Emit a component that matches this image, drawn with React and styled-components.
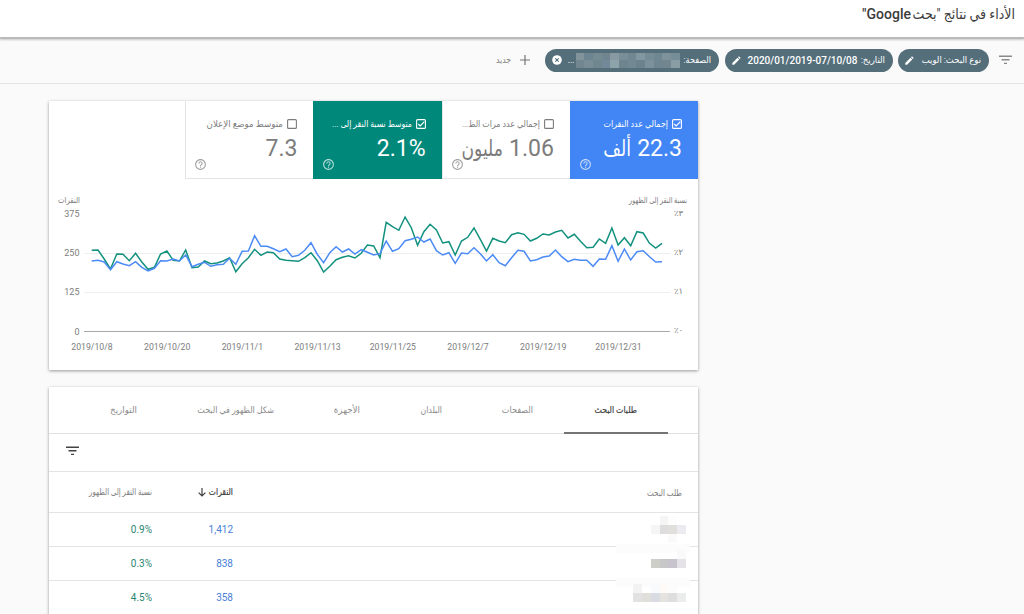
import styled, { createGlobalStyle } from "styled-components";

const GlobalStyle = createGlobalStyle`
  * {
    box-sizing: border-box;
  }
  body {
    margin: 0;
    height: 614px;
    overflow: hidden;
    background: #fafafa;
    font-family: Roboto, "Liberation Serif", "DejaVu Sans", sans-serif;
    color: #7c7c7c;
  }
`;

const Page = styled.div`
  direction: rtl;
  width: 1024px;
  height: 614px;
  overflow: hidden;
`;

const Header = styled.header`
  height: 39px;
  padding: 4px 9px 0 0;
  background: white;
  border-bottom: 2px solid #bababa;
  box-shadow: 0 1px 2px rgba(0, 0, 0, 0.2);
  position: relative;
`;

const Title = styled.h1`
  display: flex;
  gap: 4px;
  margin: 0;
  font-size: 14px;
  font-weight: 500;
  line-height: 20px;
  color: #3c3c3c;
`;

// 아랍어 글자 폭 조절
const Arabic = styled.span`
  display: inline-block;
  flex-shrink: 0;
  width: ${(props) => props.$w}px;
  font-size: ${(props) => props.$size || 9}px;
  font-weight: 400;
  white-space: nowrap;
  transform: scaleX(${(props) => props.$k || 0.9});
  transform-origin: right;
  -webkit-text-stroke: ${(props) => (props.$bold ? "0.2px" : "0")};
`;

const FilterBar = styled.div`
  display: flex;
  align-items: center;
  height: 45px;
  padding: 0 12px 2px 0;
  border-bottom: 1px solid #e4e4e4;
`;

const Chip = styled.div`
  display: flex;
  align-items: center;
  justify-content: space-between;
  width: ${(props) => props.$w}px;
  height: 23px;
  margin-right: ${(props) => props.$gap || 6}px;
  padding: 0 8px 0 7px;
  border-radius: 12px;
  background: #546e7a;
  color: white;
  font-size: 10px;
  font-weight: 500;
  white-space: nowrap;
`;

const ChipText = styled.div`
  display: flex;
  align-items: center;
  gap: ${(props) => props.$gap || 3}px;
`;

const Dots = styled.span`
  font-size: 8px;
`;

const Mosaic = styled.div`
  display: grid;
  grid-template-columns: repeat(12, 1fr);
  width: 104px;
  height: 15px;
`;

const Tile = styled.i`
  background: ${(props) => props.$color};
`;

const NewFilter = styled.div`
  display: flex;
  align-items: center;
  gap: 9px;
  margin-right: 15px;
`;

const Card = styled.section`
  width: 649px;
  height: ${(props) => props.$h}px;
  margin: 17px 326px 0 0;
  background: white;
  box-shadow: 0 1px 3px rgba(0, 0, 0, 0.4);
`;

const Metrics = styled.div`
  display: flex;
  height: 78px;
`;

const Metric = styled.div`
  width: 128.2px;
  height: 78px;
  padding: 16px 16px 0 8px;
  border-left: 1px solid ${(props) => props.$bg || "#e4e4e4"};
  border-bottom: 1px solid ${(props) => props.$bg || "#e4e4e4"};
  background: ${(props) => props.$bg || "white"};
  color: ${(props) => (props.$bg ? "white" : "#7c7c7c")};
`;

const MetricLabel = styled.div`
  display: flex;
  align-items: center;
  gap: 4px;
  height: 14px;
`;

const MetricValue = styled.div`
  display: flex;
  align-items: center;
  gap: 6px;
  height: 36px;
  font-size: 23px;
  line-height: 36px;
  white-space: nowrap;
`;

const HelpRow = styled.div`
  display: flex;
  justify-content: flex-end;
  margin-top: -9px;
`;

const AxisTitles = styled.div`
  display: flex;
  justify-content: space-between;
  height: 29px;
  padding: 16px 11px 0 13px;
`;

const Tabs = styled.nav`
  display: flex;
  height: 47px;
  padding-right: 30px;
  border-bottom: 1px solid #e0e0e0;
`;

const Tab = styled.div`
  display: flex;
  align-items: center;
  justify-content: center;
  width: ${(props) => props.$w}px;
  height: 47px;
  padding-left: 0;
  padding-right: 1px;
  border-bottom: 2px solid ${(props) => (props.$active ? "#757575" : "transparent")};
  color: ${(props) => (props.$active ? "#424242" : "#8a8a8a")};
`;

const TableTools = styled.div`
  display: flex;
  align-items: center;
  justify-content: flex-end;
  height: 37px;
  padding-left: 17px;
  padding-bottom: 4px;
`;

const Row = styled.div`
  display: grid;
  grid-template-columns: 465px 81px 103px;
  align-items: center;
  height: ${(props) => props.$h || 34.2}px;
  border-top: 1px solid #e4e4e4;
  font-size: 10px;
`;

const Cell = styled.div`
  display: flex;
  align-items: center;
  gap: 5px;
  color: ${(props) => props.$color || "#7c7c7c"};
`;

const QueryCell = styled.div`
  position: relative;
  padding-right: ${(props) => props.$pad || 12}px;
`;

// covers the divider under a hidden query
const Smear = styled.div`
  position: absolute;
  right: 8px;
  top: ${(props) => props.$top}px;
  width: 74px;
  height: 9px;
  background: #fcfcfc;
`;

const QueryMosaic = styled.div`
  position: relative;
  z-index: 1;
  display: grid;
  grid-template-columns: repeat(6, 8.8px);
  grid-auto-rows: 9px;
  width: 53px;
`;

const AxisText = styled.text`
  font-size: ${(props) => props.$size || 9}px;
  fill: #7c7c7c;
`;

const FilterIcon = ({ color }) => (
  <svg width="13" height="10" viewBox="0 0 13 10">
    <path d="M0 1.2h13M2.500 4.800h8M5 8.400h3" stroke={color} strokeWidth="1.4" />
  </svg>
);

const PencilIcon = () => (
  <svg width="9" height="9" viewBox="0 0 9 9">
    <path d="M0.300 8.700V6.900L5.500 1.700L7.300 3.500L2.100 8.700ZM6 1.200L7 0.300L8.700 2L7.800 3Z" fill="white" />
  </svg>
);

const ClearIcon = () => (
  <svg width="10" height="10" viewBox="0 0 10 10">
    <circle cx="5" cy="5" r="4.8" fill="white" />
    <path d="M3.3 3.3l3.4 3.4M6.7 3.3l-3.4 3.4" stroke="#546e7a" strokeWidth="1.1" />
  </svg>
);

const PlusIcon = () => (
  <svg width="10" height="10" viewBox="0 0 10 10">
    <path d="M5 0v10M0 5h10" stroke="#757575" strokeWidth="1.2" />
  </svg>
);

const CheckIcon = ({ checked }) => (
  <svg width="10" height="10" viewBox="0 0 10 10" fill="none" stroke="currentColor">
    <rect x="0.6" y="0.6" width="8.8" height="8.8" rx="1" strokeWidth="1.1" />
    {checked && <path d="M2.2 5l2 2 4.2-4.4" strokeWidth="1.2" />}
  </svg>
);

const HelpIcon = () => (
  <svg width="13" height="13" viewBox="0 0 24 24" fill="currentColor" opacity="0.7">
    <path d="M11 18h2v-2h-2v2zm1-16C6.480 2 2 6.480 2 12s4.480 10 10 10 10-4.480 10-10S17.520 2 12 2zm0 18c-4.410 0-8-3.590-8-8s3.590-8 8-8 8 3.590 8 8-3.590 8-8 8zm0-14c-2.210 0-4 1.790-4 4h2c0-1.100.9-2 2-2s2 .9 2 2c0 2-3 1.750-3 5h2c0-2.250 3-2.500 3-5 0-2.210-1.790-4-4-4z" />
  </svg>
);

const ArrowDown = () => (
  <svg width="8" height="9" viewBox="0 0 8 9" fill="none" stroke="#424242" strokeWidth="1.2">
    <path d="M4 0v8M0.6 4.600L4 8l3.400-3.400" />
  </svg>
);

// y values, three units per pixel
const ctr = [
  196, 195, 222, 252, 207, 208, 227, 205, 231, 253, 247, 207, 198, 226, 228, 195, 248, 246, 228,
  236, 234, 228, 218, 260, 236, 218, 193, 211, 201, 203, 222, 226, 227, 229, 218, 203, 227, 261,
  244, 224, 217, 212, 219, 205, 180, 183, 218, 112, 125, 136, 96, 128, 181, 140, 118, 135, 174,
  170, 210, 168, 157, 129, 163, 198, 160, 168, 173, 149, 143, 148, 168, 160, 147, 150, 141, 136,
  159, 148, 169, 188, 187, 162, 175, 129, 180, 158, 182, 140, 144, 175, 189, 175,
];
const clicks = [
  228, 226, 231, 254, 230, 237, 242, 230, 247, 258, 250, 227, 228, 222, 228, 210, 245, 238, 232,
  244, 239, 238, 220, 238, 199, 198, 152, 184, 184, 191, 200, 192, 215, 211, 196, 173, 208, 233,
  203, 185, 201, 192, 207, 194, 202, 210, 206, 168, 199, 191, 167, 163, 156, 171, 162, 197, 210,
  203, 235, 204, 206, 188, 206, 228, 209, 233, 242, 218, 196, 199, 228, 224, 216, 213, 195, 215,
  230, 223, 226, 226, 244, 222, 223, 182, 229, 192, 225, 200, 197, 215, 231, 230,
];

const toPoints = (list) =>
  list.map((y, i) => `${(42.7 + i * 6.267).toFixed(1)},${(y / 3 - 23).toFixed(1)}`).join(" ");

const dates = [
  "2019/10/8",
  "2019/10/20",
  "2019/11/1",
  "2019/11/13",
  "2019/11/25",
  "2019/12/7",
  "2019/12/19",
  "2019/12/31",
];

const ChartSvg = styled.svg`
  display: block;
  direction: ltr;
`;

const Chart = () => (
  <ChartSvg width="649" height="160">
    {[375, 250, 125, 0].map((n, i) => (
      <AxisText key={n} x="30.500" y={9 + i * 39.2} textAnchor="end">{n}</AxisText>
    ))}
    {["٪٣", "٪٢", "٪١", "٪٠"].map((n, i) => (
      <AxisText key={n} x="625" y={7.5 + i * 39.2} $size="8.5">{n}</AxisText>
    ))}
    <path d="M35 45.500H621M35 84.500H621" stroke="#eeeeee" />
    <path d="M35 123.500H621" stroke="#a8a8a8" />
    <polyline points={toPoints(ctr)} fill="none" stroke="#12917e" strokeWidth="1.5" />
    <polyline points={toPoints(clicks)} fill="none" stroke="#4c8bf5" strokeWidth="1.5" />
    {dates.map((d, i) => (
      <AxisText key={d} x={43 + i * 75.2} y="141.5" textAnchor="middle" $size="8.7">{d}</AxisText>
    ))}
  </ChartSvg>
);

const chipTiles = [
  "#758d97", "#7d929b", "#6f8792", "#758c96", "#8198a1", "#718892",
  "#788e98", "#8799a1", "#70858f", "#758b94", "#6d8590", "#81949c",
  "#899da5", "#71868f", "#6f8690", "#7c919b", "#6c828d", "#718993",
  "#6e858f", "#8ea3a9", "#73899a", "#71878f", "#788d96", "#71868f",
];

const metrics = [
  { label: "إجمالي عدد النقرات", w: 65, k: 0.88, value: "22.3", unit: "ألف", bg: "#4285f4", checked: true },
  { label: "إجمالي عدد مرات الظ...", w: 78, k: 0.88, value: "1.06", unit: "مليون" },
  { label: "متوسط نسبة النقر إلى ...", w: 79, k: 0.86, value: "2.1%", bg: "#00897b", checked: true },
  { label: "متوسط موضع الإعلان", w: 77, k: 0.96, value: "7.3" },
];

const tabs = [
  { label: "طلبات البحث", tab: 104, w: 43, k: 0.87 },
  { label: "الصفحات", tab: 92, w: 31, k: 0.9 },
  { label: "البلدان", tab: 81, w: 21, k: 0.87 },
  { label: "الأجهزة", tab: 87, w: 26, k: 0.97 },
  { label: "شكل الظهور في البحث", tab: 136, w: 77, k: 0.89 },
  { label: "التواريخ", tab: 88, w: 27, k: 0.97 },
];

const _ = "transparent";
const rows = [
  {
    clicks: "1,412",
    ctr: "0.9%",
    tiles: [_, "#fdfdfd", "#f5f5f5", _, _, _, "#ececf0", "#e0dfdb", "#dddddd", "#f5f5f5", _, _, _, "#fafafa", _, _, _, _],
  },
  {
    clicks: "838",
    ctr: "0.3%",
    smear: -6,
    tiles: ["#f9f9f9", _, _, _, _, _, "#e5e3e7", "#c7c4cd", "#c7c7c7", "#cdcec8", _, _, _, _, _, _, _, _],
  },
  {
    clicks: "358",
    ctr: "4.5%",
    smear: -6,
    tiles: [_, "#fcfcfd", "#fdfaf7", "#f9fafb", _, "#f3f3f3", "#ebecec", "#dedede", "#e5e3df", "#d9dce2", "#e0dfdc", "#e2e2e2", _, _, _, _, _, _],
  },
];

const App = () => {
  return (
    <Page>
      <GlobalStyle />
      <Header>
        <Title>
          <Arabic $w={100} $size={14} $k={0.9}>الأداء في نتائج "بحث</Arabic>
          <span>Google"</span>
        </Title>
      </Header>
      <FilterBar>
        <FilterIcon color="#8a8a8a" />
        <Chip $w={91} $gap={10}>
          <Arabic $w={58} $k={0.94}>نوع البحث: الويب</Arabic>
          <PencilIcon />
        </Chip>
        <Chip $w={168} $gap={5.5}>
          <ChipText>
            <Arabic $w={24} $k={0.95}>التاريخ:</Arabic>
            <bdi dir="ltr">2020/01/2019-07/10/08</bdi>
          </ChipText>
          <PencilIcon />
        </Chip>
        <Chip $w={174}>
          <ChipText $gap={1}>
            <Arabic $w={30}>الصفحة:</Arabic>
            <Mosaic>
              {chipTiles.map((c, i) => (
                <Tile key={i} $color={c} />
              ))}
            </Mosaic>
            <Dots>...</Dots>
          </ChipText>
          <ClearIcon />
        </Chip>
        <NewFilter>
          <PlusIcon />
          <Arabic $w={14} $k={0.85}>جديد</Arabic>
        </NewFilter>
      </FilterBar>
      <Card $h={269}>
        <Metrics>
          {metrics.map((m) => (
            <Metric key={m.label} $bg={m.bg}>
              <MetricLabel>
                <CheckIcon checked={m.checked} />
                <Arabic $w={m.w} $k={m.k}>{m.label}</Arabic>
              </MetricLabel>
              <MetricValue>
                <bdi>{m.value}</bdi>
                {m.unit && <Arabic $w={28} $size={22} $k={0.78}>{m.unit}</Arabic>}
              </MetricValue>
              <HelpRow>
                <HelpIcon />
              </HelpRow>
            </Metric>
          ))}
        </Metrics>
        <AxisTitles>
          <Arabic $w={58} $size={8.5} $k={0.76}>نسبة النقر إلى الظهور</Arabic>
          <Arabic $w={18} $size={8.5} $k={0.82}>النقرات</Arabic>
        </AxisTitles>
        <Chart />
      </Card>
      <Card $h={240}>
        <Tabs>
          {tabs.map((t, i) => (
            <Tab key={t.label} $w={t.tab} $active={i === 0}>
              <Arabic $w={t.w} $k={t.k} $bold={i === 0}>{t.label}</Arabic>
            </Tab>
          ))}
        </Tabs>
        <TableTools>
          <FilterIcon color="#424242" />
        </TableTools>
        <Row $h={41.2}>
          <QueryCell $pad={16}>
            <Arabic $w={35} $k={0.8}>طلب البحث</Arabic>
          </QueryCell>
          <Cell $color="#424242">
            <Arabic $w={22} $k={0.85} $bold>النقرات</Arabic>
            <ArrowDown />
          </Cell>
          <Cell>
            <Arabic $w={64} $k={0.78}>نسبة النقر إلى الظهور</Arabic>
          </Cell>
        </Row>
        {rows.map((r) => (
          <Row key={r.clicks} $h={34}>
            <QueryCell>
              {r.smear && <Smear $top={r.smear} />}
              <QueryMosaic>
                {r.tiles.map((c, i) => (
                  <Tile key={i} $color={c} />
                ))}
              </QueryMosaic>
            </QueryCell>
            <Cell $color="#4a80d8">{r.clicks}</Cell>
            <Cell $color="#2c8573">
              <bdi>{r.ctr}</bdi>
            </Cell>
          </Row>
        ))}
      </Card>
    </Page>
  );
};

export default App;
